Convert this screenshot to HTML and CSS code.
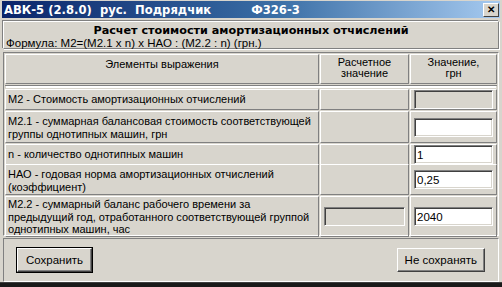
FILE: index.html
```html
<!DOCTYPE html>
<html lang="ru">
<head>
  <meta charset="UTF-8">
  <title>АВК-5 (2.8.0)</title>
  <link rel="stylesheet" href="styles.css">
</head>
<body>

  <div class="window">
    <div class="titlebar">
      <span class="title">АВК-5 (2.8.0)&nbsp; рус.&nbsp; Подрядчик</span>
      <span class="form-code">Ф326-3</span>
      <button class="close">&#x2715;</button>
    </div>

    <div class="caption">
      <div class="caption-title">Расчет стоимости амортизационных отчислений</div>
      <div class="formula">Формула: М2=(М2.1 x n) x НАО : (М2.2 : n) (грн.)</div>
    </div>

    <div class="grid">
      <div class="grid-head">
        <div class="cell head head-main">Элементы выражения</div>
        <div class="cell head">Расчетное<br>значение</div>
        <div class="cell head">Значение,<br>грн</div>
      </div>

      <div class="grid-body">
        <div class="row r-m2">
          <div class="cell name">М2 - Стоимость амортизационных отчислений</div>
          <div class="cell"></div>
          <div class="cell value"><input class="field disabled" type="text" disabled></div>
        </div>
        <div class="row r-m21">
          <div class="cell name">М2.1 - суммарная балансовая стоимость соответствующей группы однотипных машин, грн</div>
          <div class="cell"></div>
          <div class="cell value"><input class="field" type="text"></div>
        </div>
        <div class="row r-n">
          <div class="cell name">n - количество однотипных машин</div>
          <div class="cell"></div>
          <div class="cell value"><input class="field" type="text" value="1"></div>
        </div>
        <div class="row r-nao">
          <div class="cell name">НАО - годовая норма амортизационных отчислений (коэффициент)</div>
          <div class="cell"></div>
          <div class="cell value"><input class="field" type="text" value="0,25"></div>
        </div>
        <div class="row r-m22">
          <div class="cell name">М2.2 - суммарный баланс рабочего времени за предыдущий год, отработанного соответствующей группой однотипных машин, час</div>
          <div class="cell value"><input class="field disabled" type="text" disabled></div>
          <div class="cell value"><input class="field" type="text" value="2040"></div>
        </div>
      </div>
    </div>

    <div class="footer">
      <button class="btn default">Сохранить</button>
      <button class="btn">Не сохранять</button>
    </div>
  </div>

</body>
</html>
```

FILE: styles.css
```css
body {
  margin: 0;
  font-family: "Liberation Sans", Arial, sans-serif;
  font-size: 11px;
  color: #000;
  background: #1a1a1a;
}
.window {
  width: 502px;
  height: 283px;
  background: #d8d5cd;
  display: flex;
  flex-direction: column;
  border-bottom: 1px solid #404040;
  box-sizing: border-box;
}
.titlebar {
  height: 18px;
  margin: 1px 2px 0;
  background: linear-gradient(to right, #0a246a, #3a6ea5 55%, #a6caf0);
  color: #fff;
  font-family: "DejaVu Sans", Verdana, sans-serif;
  font-weight: bold;
  font-size: 11.6px;
  display: flex;
  align-items: center;
  padding-left: 2px;
}
.title {
  white-space: pre;
}
.form-code {
  margin-left: 40px;
}
.close {
  margin-left: auto;
  margin-right: 1px;
  width: 16px;
  height: 14px;
  padding: 0;
  font-size: 10px;
  font-weight: bold;
  line-height: 10px;
  background: #d8d5cd;
  border: 1px solid;
  border-color: #fff #404040 #404040 #fff;
  color: #000;
}
.caption {
  margin: 3px 3px 0;
  height: 26px;
  border: 1px solid;
  border-color: #fff #808080 #808080 #fff;
  box-shadow: 1px 1px 0 #fff, -1px -1px 0 #808080;
  padding: 0 2px;
}
.caption-title {
  font-family: "DejaVu Sans", Verdana, sans-serif;
  font-weight: bold;
  font-size: 11.2px;
  text-align: center;
  line-height: 13px;
  margin-top: 2px;
}
.formula {
  font-size: 11.5px;
  line-height: 13px;
}
.grid {
  margin: 3px 3px 0;
  border: 1px solid;
  border-color: #808080 #fff #fff #808080;
  padding: 1px;
}
.grid-head,
.row {
  display: grid;
  grid-template-columns: 314px 89px 87px;
  column-gap: 1px;
}
.grid-head {
  height: 30px;
  border-bottom: 1px solid #808080;
  padding-bottom: 1px;
  margin-bottom: 3px;
  box-shadow: 0 3px 0 -1px #fff;
}
.cell {
  border: 1px solid;
  border-color: #fff #808080 #808080 #fff;
  box-sizing: border-box;
}
.head {
  text-align: center;
  line-height: 11px;
  padding-top: 2px;
}
.head-main {
  padding-top: 4px;
}
.grid-body {
  display: flex;
  flex-direction: column;
  row-gap: 1px;
}
.name {
  padding: 3px 2px 0;
  line-height: 13px;
}
.value {
  display: flex;
  align-items: center;
  padding: 0 3px;
}
.r-m2 { height: 21px; }
.r-m21 { height: 32px; }
.r-n { height: 19px; }
.r-nao { height: 31px; }
.r-m22 { height: 38px; }
.r-m22 .name { padding-top: 1px; line-height: 12.5px; }
.field {
  width: 100%;
  height: 19px;
  box-sizing: border-box;
  border: 1px solid;
  border-color: #808080 #fff #fff #808080;
  box-shadow: inset 1px 1px 0 #404040, inset -1px -1px 0 #d8d5cd;
  background: #fff;
  font: 11.5px "Liberation Sans", Arial, sans-serif;
  padding: 1px 2px 0;
  margin: 0;
  outline: none;
}
.field.disabled {
  background: #d8d5cd;
}
.footer {
  margin: 2px 3px 0;
  height: 43px;
  border: 1px solid;
  border-color: #808080 #fff #fff #808080;
  display: flex;
  justify-content: space-between;
  align-items: center;
  padding: 0 13px 0 13px;
}
.btn {
  height: 24px;
  min-width: 75px;
  padding: 0 7px;
  font: 11.5px "Liberation Sans", Arial, sans-serif;
  background: #d8d5cd;
  border: 1px solid;
  border-color: #fff #404040 #404040 #fff;
  box-shadow: inset -1px -1px 0 #808080;
  color: #000;
}
.btn.default {
  outline: 1px solid #000;
}
```
